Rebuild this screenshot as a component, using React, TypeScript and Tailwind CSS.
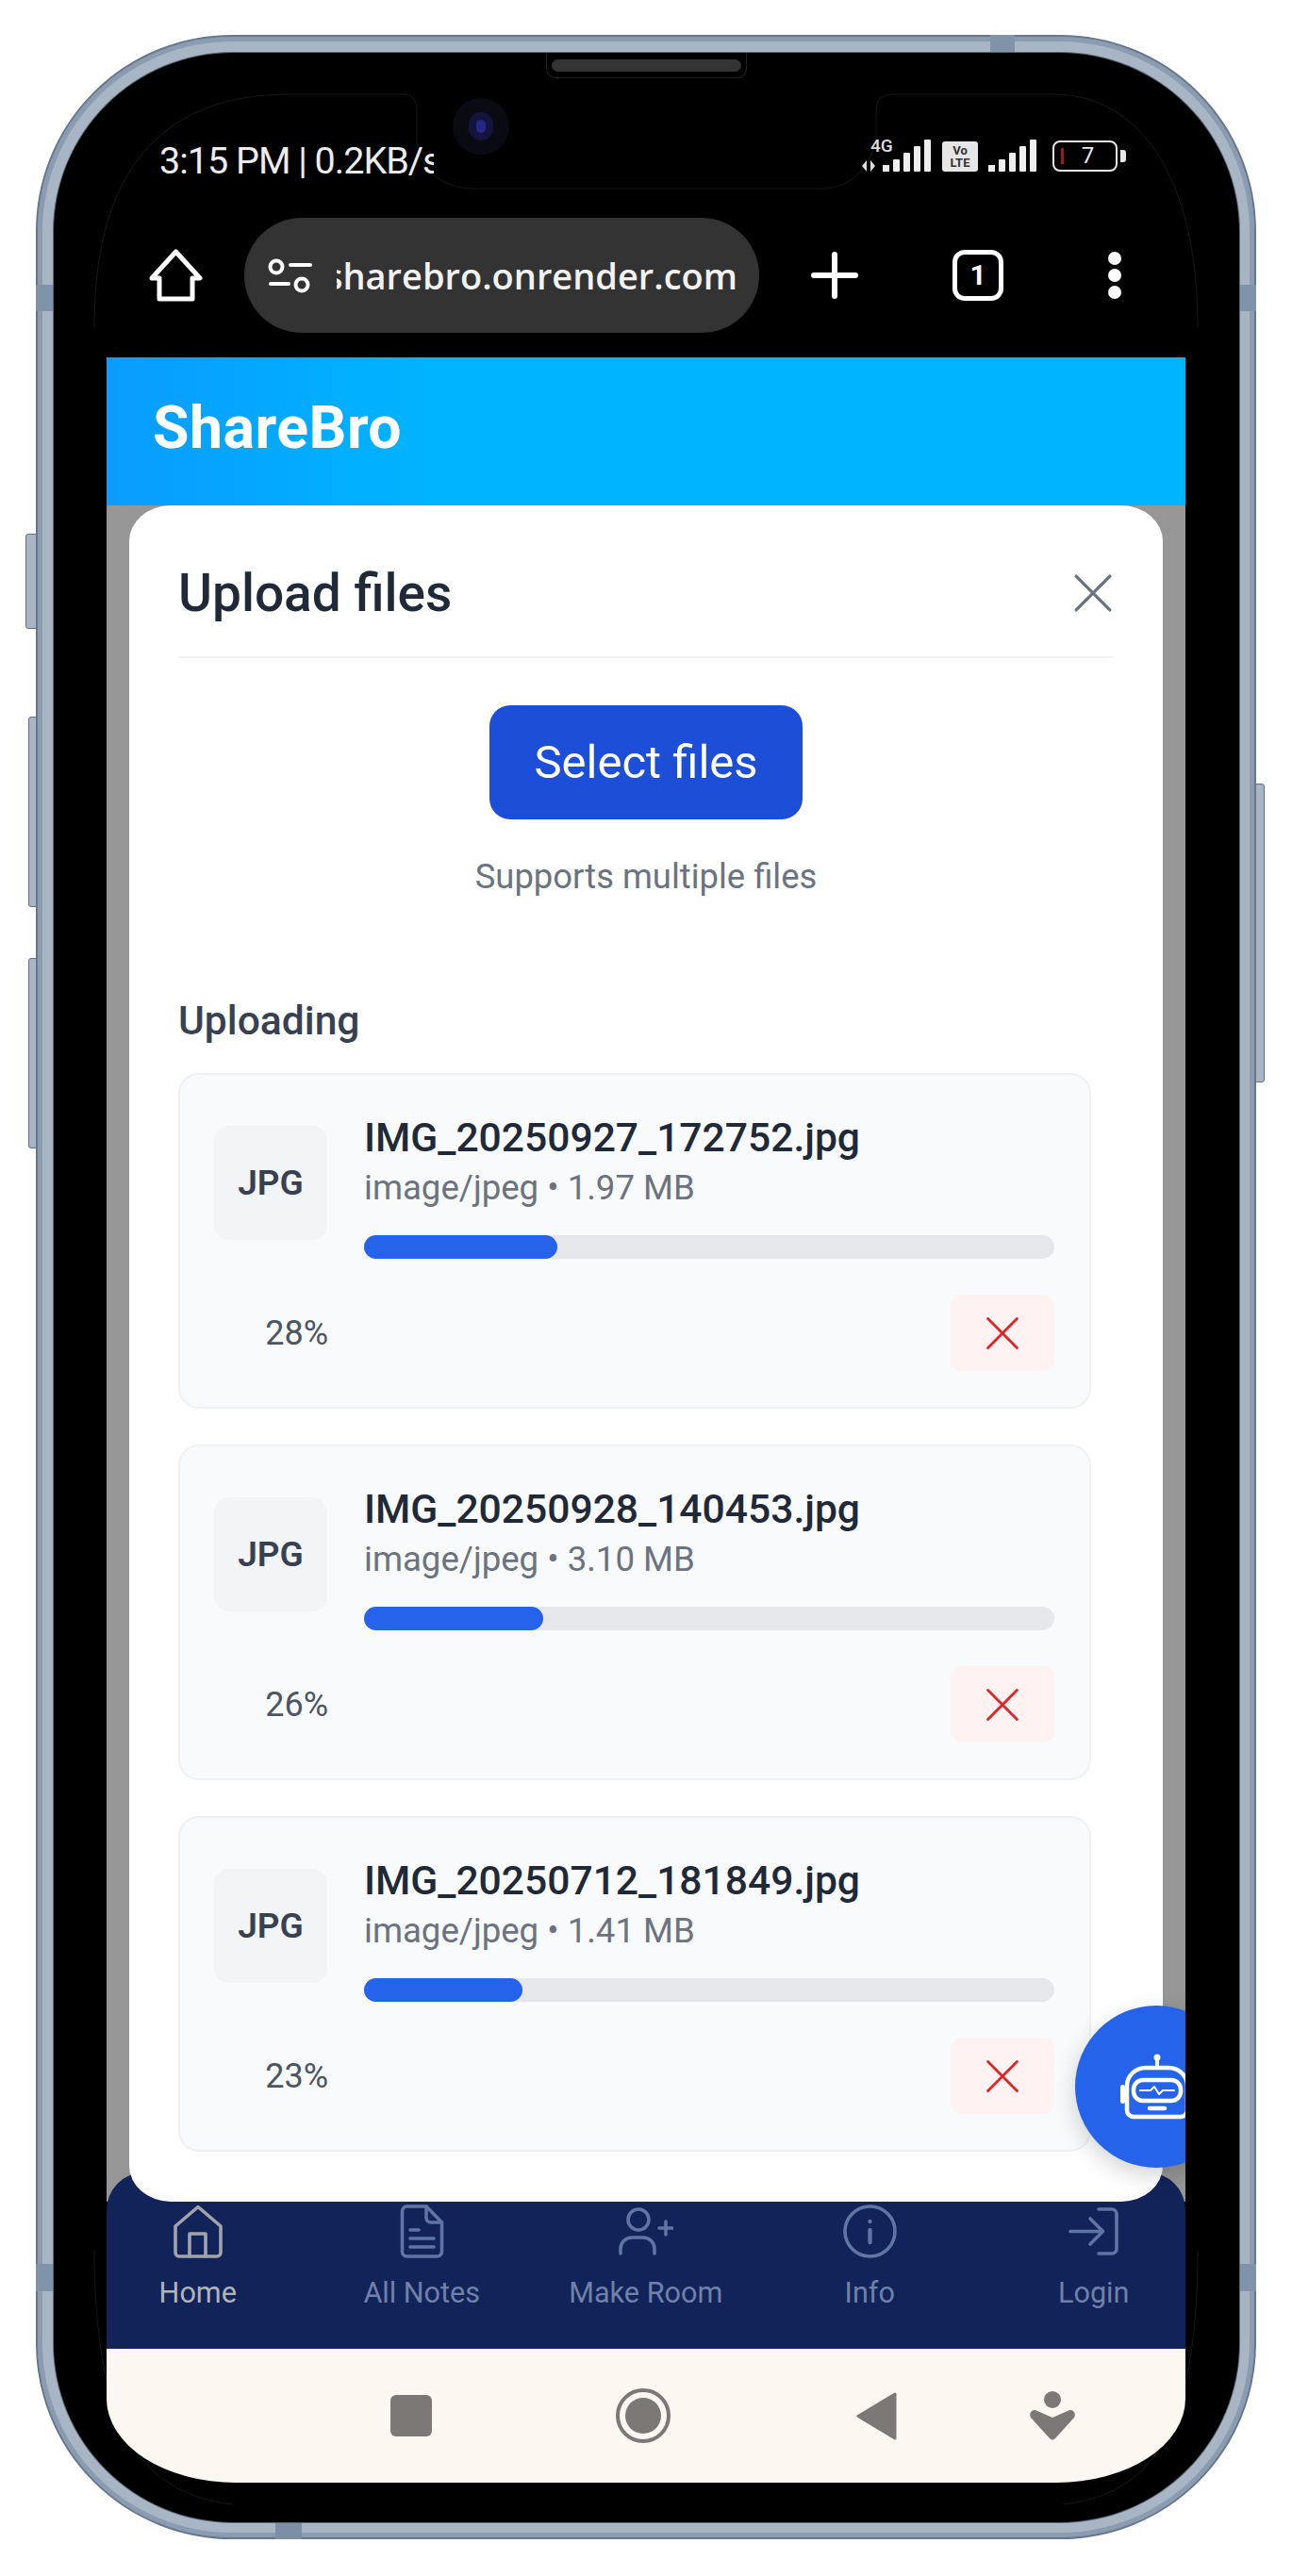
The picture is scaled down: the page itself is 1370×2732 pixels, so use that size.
import React from "react";

const files = [
  { name: "IMG_20250927_172752.jpg", size: "1.97 MB", pct: 28 },
  { name: "IMG_20250928_140453.jpg", size: "3.10 MB", pct: 26 },
  { name: "IMG_20250712_181849.jpg", size: "1.41 MB", pct: 23 },
];

function CloseIcon({ className, size }: { className: string; size: number }) {
  return (
    <svg width={size} height={size} viewBox="0 0 32 32" fill="none" className={className} stroke="currentColor" strokeWidth="2.4" strokeLinecap="round">
      <path d="M3 3 L29 29 M29 3 L3 29" />
    </svg>
  );
}

function UploadCard({ name, size, pct }: { name: string; size: string; pct: number }) {
  return (
    <div className="rounded-[22px] border-2 border-[#eff0f2] bg-[#f9fafb] pt-[42px] pr-[37px] pb-[38px] pl-[36px]">
      <div className="flex gap-[39px]">
        <div className="mt-[12px] flex h-[121px] w-[120px] shrink-0 items-center justify-center rounded-[16px] bg-[#f3f4f6] text-[37px] font-semibold text-[#374151]">
          JPG
        </div>
        <div className="flex-1">
          <div className="h-[48px] text-[42.6px] leading-[48px] font-medium whitespace-nowrap text-[#1f2937]">{name}</div>
          <div className="mt-[10px] h-[40px] text-[36.6px] leading-[40px] text-[#6b7280]">image/jpeg • {size}</div>
          <div className="mt-[30px] h-[25px] w-full rounded-full bg-[#e5e7eb]">
            <div className="h-full rounded-full bg-[#2563eb]" style={{ width: `${pct}%` }} />
          </div>
        </div>
      </div>
      <div className="mt-[38px] flex items-center justify-between">
        <div className="w-[121px] text-right text-[36px] text-[#4b5563]">{pct}%</div>
        <div className="flex h-[81px] w-[110px] items-center justify-center rounded-[12px] bg-[#fef2f2]">
          <CloseIcon size={38} className="text-[#dc2626]" />
        </div>
      </div>
    </div>
  );
}

function Bars({ w = 52 }: { w?: number }) {
  return (
    <svg width={w} height={34} viewBox="0 0 52 34" fill="#eeeeee">
      <rect x="0" y="27" width="7" height="7" />
      <rect x="11" y="21" width="7" height="13" rx="1" />
      <rect x="22" y="14" width="7" height="20" rx="1" />
      <rect x="33" y="7" width="7" height="27" rx="1" />
      <rect x="44" y="0" width="7" height="34" rx="1" />
    </svg>
  );
}

const navStroke = { fill: "none", stroke: "currentColor", strokeWidth: 3.6, strokeLinecap: "round" as const, strokeLinejoin: "round" as const };

const navItems = [
  {
    label: "Home",
    active: true,
    icon: (
      <svg width="54" height="57" viewBox="0 0 54 57" {...navStroke}>
        <path d="M3 23 L27 2.5 L51 23 V51 a4 4 0 0 1 -4 4 H7 a4 4 0 0 1 -4 -4 Z" />
        <path d="M18 55 V31 H35 V55" />
      </svg>
    ),
  },
  {
    label: "All Notes",
    icon: (
      <svg width="47" height="57" viewBox="0 0 47 57" {...navStroke}>
        <path d="M2.5 7 a5 5 0 0 1 5 -5 H28 L44.5 19 V50 a5 5 0 0 1 -5 5 H7.5 a5 5 0 0 1 -5 -5 Z" />
        <path d="M28 2 V14 a5 5 0 0 0 5 5 H44.5" />
        <path d="M11 27 H20 M11 36 H36 M11 45 H36" />
      </svg>
    ),
  },
  {
    label: "Make Room",
    icon: (
      <svg width="58" height="51" viewBox="0 0 58 51" {...navStroke}>
        <circle cx="21" cy="13" r="11" />
        <path d="M2 49 V44 a12 12 0 0 1 12 -12 H26 a12 12 0 0 1 12 12 V49" />
        <path d="M43 22 H57 M50 15 V29" />
      </svg>
    ),
  },
  {
    label: "Info",
    icon: (
      <svg width="57" height="57" viewBox="0 0 57 57" {...navStroke}>
        <circle cx="28.5" cy="28.5" r="26.5" />
        <path d="M28.5 27 V40" strokeWidth="4.4" />
        <circle cx="28.5" cy="18" r="2.2" fill="currentColor" stroke="none" />
      </svg>
    ),
  },
  {
    label: "Login",
    icon: (
      <svg width="54" height="51" viewBox="0 0 54 51" {...navStroke}>
        <path d="M2 25.5 H36 M23 12 L36.5 25.5 L23 39" />
        <path d="M32 2 H46 a5 5 0 0 1 5 5 V44 a5 5 0 0 1 -5 5 H32" />
      </svg>
    ),
  },
];

export default function App() {
  return (
    <div className="relative h-[2732px] w-[1370px] overflow-hidden bg-white pt-[37px] pl-[38px] font-['Roboto',sans-serif]">
      {/* side buttons */}
      <div className="absolute top-[566px] left-[27px] h-[101px] w-[12px] rounded-l-[3px] border border-[#5f6f84] bg-[#a9b5c5]" />
      <div className="absolute top-[760px] left-[30px] h-[202px] w-[9px] rounded-l-[3px] border border-[#5f6f84] bg-[#a9b5c5]" />
      <div className="absolute top-[1016px] left-[30px] h-[202px] w-[9px] rounded-l-[3px] border border-[#5f6f84] bg-[#a9b5c5]" />
      <div className="absolute top-[831px] left-[1330px] h-[317px] w-[11px] rounded-r-[3px] border border-[#5f6f84] bg-[#a9b5c5]" />

      <div className="relative h-[2656px] w-[1294px] rounded-[208px] border-2 border-[#66778c] bg-[#a8b5c5] p-[17px] shadow-[inset_0_0_0_5px_#8b9cb1]">
        {/* antenna bands */}
        <div className="absolute top-[263px] -left-[2px] h-[28px] w-[19px] bg-[#8193a8]" />
        <div className="absolute top-[263px] -right-[2px] h-[28px] w-[19px] bg-[#8193a8]" />
        <div className="absolute top-[2362px] -left-[2px] h-[29px] w-[19px] bg-[#8193a8]" />
        <div className="absolute top-[2362px] -right-[2px] h-[29px] w-[19px] bg-[#8193a8]" />
        <div className="absolute -top-[2px] left-[1010px] h-[19px] w-[26px] bg-[#8193a8]" />
        <div className="absolute -bottom-[2px] left-[252px] h-[19px] w-[28px] bg-[#7d8fa4]" />

        <div className="relative h-[2619px] w-[1257px] overflow-hidden rounded-[190px] bg-black ring-1 ring-[#5b6470]">
          {/* earpiece */}
          <div className="absolute top-0 left-[522px] flex h-[27px] w-[213px] items-center justify-center rounded-b-[10px] border border-t-0 border-[#222222]">
            <div className="h-[13px] w-[201px] rounded-full bg-[#333333]" />
          </div>
          {/* camera */}
          <div className="absolute top-[48px] left-[423px] flex h-[60px] w-[60px] items-center justify-center rounded-full bg-[#0a0a12]">
            <div className="flex h-[30px] w-[26px] items-center justify-center rounded-full bg-[#13133c]">
              <div className="h-[14px] w-[10px] rounded-full bg-[#26268a]" />
            </div>
          </div>
          {/* faint display outline */}
          <svg className="pointer-events-none absolute top-0 left-0" width="1257" height="2619" viewBox="0 0 1257 2619" fill="none" stroke="#242424" strokeWidth="0.7">
            <path d="M43 290 C43 130 110 44 250 44 H370 Q385 44 385 60 V95 C387 125 415 144 445 144 H815 C845 144 868 120 872 90 V60 Q872 44 890 44 H1060 C1150 44 1213 130 1213 290" />
            <path d="M43 2330 C43 2530 100 2590 190 2600 M1213 2330 C1213 2530 1160 2590 1070 2600" />
          </svg>

          {/* status bar */}
          <div className="relative mt-[85px] flex h-[60px] items-center justify-between pr-[120px] pl-[112px]">
            <div className="w-[291px] overflow-hidden text-[39.5px] leading-[60px] whitespace-nowrap text-[#ececec] tracking-[-1px]">
              3:15 PM | 0.2KB/s
            </div>
            <div className="flex items-end gap-[11px] pb-[13px]">
              <div className="relative flex h-[34px] items-end">
                <span className="absolute -top-[1px] -left-[13px] text-[19px] leading-[16px] font-medium text-[#dddddd]">4G</span>
                <svg width="22" height="12" viewBox="0 0 22 12" fill="#dddddd" className="-ml-[22px]">
                  <path d="M5 0 V12 L0 6 Z M9 0 V12 L14 6 Z" />
                </svg>
                <Bars />
              </div>
              <div className="flex h-[32px] w-[38px] flex-col items-center justify-center rounded-[3px] bg-[#e6e6e6] text-[13px] leading-[13px] font-bold text-[#333333]">
                <span>Vo</span>
                <span>LTE</span>
              </div>
              <Bars />
              <div className="ml-[5px] flex items-center">
                <div className="relative flex h-[33px] w-[69px] items-center justify-center rounded-[8px] border-[2.5px] border-[#e8e8e8] text-[24px] leading-none text-[#e8e8e8]">
                  <div className="absolute top-[6px] left-[7px] h-[17px] w-[3px] bg-[#a81616]" />
                  <span className="ml-[6px]">7</span>
                </div>
                <div className="ml-[3px] h-[13px] w-[6px] rounded-r-[3px] bg-[#e8e8e8]" />
              </div>
            </div>
          </div>

          {/* browser toolbar */}
          <div className="relative mt-[30px] flex h-[122px] items-center pl-[101px]">
            <svg width="57" height="56" viewBox="0 0 57 56" fill="none" stroke="white" strokeWidth="5" strokeLinejoin="round">
              <path d="M28.5 3 L54 31 H46 V53 H11 V31 H3 Z" />
            </svg>
            <div className="ml-[44px] flex h-[122px] w-[546px] items-center rounded-full bg-[#333333] pl-[25px]">
              <svg width="47" height="37" viewBox="0 0 47 37" fill="none" stroke="white" strokeWidth="4" strokeLinecap="round">
                <circle cx="9" cy="9" r="6.5" />
                <path d="M24 7 H45" />
                <circle cx="36" cy="28" r="6.5" />
                <path d="M3 27 H22" />
              </svg>
              <div className="ml-[26px] flex w-[425px] justify-end overflow-hidden text-[38px] font-semibold whitespace-nowrap text-[#f2f2f2] font-['Open_Sans',sans-serif]">
                sharebro.onrender.com
              </div>
            </div>
            <svg width="50" height="50" viewBox="0 0 50 50" className="ml-[55px]" stroke="white" strokeWidth="6" strokeLinecap="round">
              <path d="M25 3 V47 M3 25 H47" />
            </svg>
            <div className="ml-[100px] flex h-[54px] w-[54px] items-center justify-center rounded-[13px] border-[5px] border-white text-[30px] leading-none font-bold text-white">
              1
            </div>
            <div className="ml-[111px] flex flex-col gap-[4px]">
              <div className="h-[14px] w-[14px] rounded-full bg-white" />
              <div className="h-[14px] w-[14px] rounded-full bg-white" />
              <div className="h-[14px] w-[14px] rounded-full bg-white" />
            </div>
          </div>

          {/* page */}
          <div className="relative mt-[26px] ml-[56px] w-[1144px] overflow-hidden rounded-br-[137px_89px] rounded-bl-[137px_89px]">
            <header className="flex h-[157px] items-center bg-gradient-to-r from-[#0a9cff] to-[#00b4ff] to-30% pl-[49px] text-[62.5px] font-bold text-white">
              <span className="-mt-[8px] tracking-[0.5px]">ShareBro</span>
            </header>

            <main className="bg-[#969696] px-[24px]">
              <section className="relative z-10 rounded-[44px/38px] bg-white px-[52px] pb-[53px]">
                <div className="flex h-[162px] items-center justify-between border-b-2 border-[#f0f1f3] pt-[26px]">
                  <h2 className="text-[55px] font-medium text-[#1f2937]">Upload files</h2>
                  <CloseIcon size={44} className="text-[#6b7280]" />
                </div>
                <div className="mt-[50px] flex flex-col items-center">
                  <button className="h-[121px] w-[332px] rounded-[22px] bg-[#1d4ed8] text-[49px] text-white">Select files</button>
                  <p className="mt-[39px] text-[36.4px] leading-[44px] text-[#6b7280]">Supports multiple files</p>
                </div>
                <h3 className="mt-[106px] text-[42.6px] leading-[48px] font-medium text-[#374151]">Uploading</h3>
                <div className="mt-[32px] flex w-[968px] flex-col gap-[38px]">
                  {files.map((f) => (
                    <UploadCard key={f.name} {...f} />
                  ))}
                </div>
              </section>
            </main>

            <nav className="-mt-[31px] h-[187px] overflow-hidden rounded-t-[40px] bg-[#12235a] pt-[34px]">
              <div className="-ml-[22px] grid grid-cols-[repeat(5,237.5px)]">
                {navItems.map((n) => (
                  <div key={n.label} className={`flex flex-col items-center ${n.active ? "text-[#a0a4aa]" : "text-[#5f75a3]"}`}>
                    <div className="flex h-[57px] items-center">{n.icon}</div>
                    <div className={`mt-[17px] text-[30.6px] leading-[40px] whitespace-nowrap ${n.active ? "text-[#b0b4ba]" : "text-[#6f81a8]"}`}>{n.label}</div>
                  </div>
                ))}
              </div>
            </nav>

            {/* system nav */}
            <div className="flex h-[142px] items-center bg-[#fdf7f1] pl-[301px]">
              <div className="h-[44px] w-[44px] rounded-[6px] bg-[#7b7876]" />
              <div className="ml-[195px] flex h-[58px] w-[58px] items-center justify-center rounded-full border-[4px] border-[#7b7876]">
                <div className="h-[38px] w-[38px] rounded-full bg-[#7b7876]" />
              </div>
              <svg width="43" height="51" viewBox="0 0 43 51" className="ml-[197px]" fill="#7b7876" stroke="#7b7876" strokeWidth="3" strokeLinejoin="round">
                <path d="M41 2 V49 L2 25.5 Z" />
              </svg>
              <svg width="50" height="52" viewBox="0 0 50 52" className="ml-[140px]" fill="#7b7876">
                <circle cx="25" cy="9" r="9" />
                <path d="M3 21 Q6 19 9 21 L25 28 L41 21 Q44 19 47 21 Q50 24 48 28 L28 50 Q25 53 22 50 L2 28 Q0 24 3 21 Z" />
              </svg>
            </div>

            {/* chat bot button */}
            <div className="absolute top-[1748px] left-[1027px] z-20 flex h-[172px] w-[172px] items-center justify-center rounded-full bg-[#2563eb] shadow-[0_8px_24px_rgba(0,0,0,0.18)]">
              <svg width="78" height="70" viewBox="0 0 78 70" fill="none" stroke="white" strokeLinecap="round" strokeLinejoin="round" className="ml-[2px]">
                <circle cx="39" cy="4" r="3.5" fill="white" stroke="none" />
                <path d="M39 6 V15" strokeWidth="4" />
                <path d="M7 34 a20 19 0 0 1 20 -19 H51 a20 19 0 0 1 20 19 V60 a7 7 0 0 1 -7 7 H14 a7 7 0 0 1 -7 -7 Z" strokeWidth="4.5" />
                <rect x="14" y="28" width="50" height="22" rx="10" strokeWidth="4.5" />
                <path d="M21 39 H32 L36 35 L41 43 L45 39 H57" strokeWidth="2" />
                <path d="M31 58 H47" strokeWidth="4.5" />
                <rect x="0" y="33" width="5" height="20" rx="2.5" fill="white" stroke="none" />
                <rect x="73" y="33" width="5" height="20" rx="2.5" fill="white" stroke="none" />
              </svg>
            </div>
          </div>
        </div>
      </div>
    </div>
  );
}
